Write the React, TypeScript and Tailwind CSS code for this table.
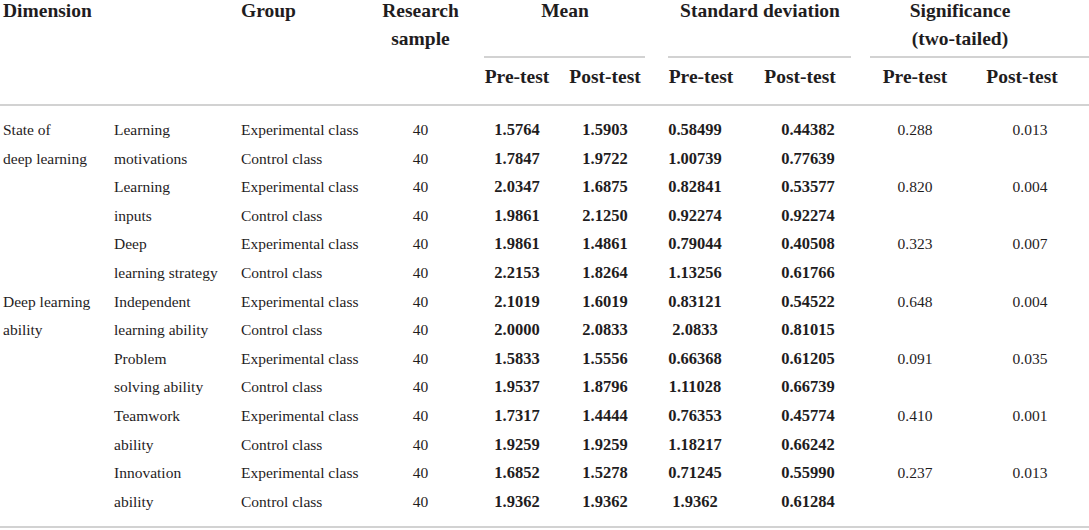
type Row = {
  dim?: string;
  sub: string;
  group: string;
  m1: string;
  m2: string;
  s1: string;
  s2: string;
  p1?: string;
  p2?: string;
};

const EXP = "Experimental class";
const CTRL = "Control class";

const rows: Row[] = [
  { dim: "State of", sub: "Learning", group: EXP, m1: "1.5764", m2: "1.5903", s1: "0.58499", s2: "0.44382", p1: "0.288", p2: "0.013" },
  { dim: "deep learning", sub: "motivations", group: CTRL, m1: "1.7847", m2: "1.9722", s1: "1.00739", s2: "0.77639" },
  { sub: "Learning", group: EXP, m1: "2.0347", m2: "1.6875", s1: "0.82841", s2: "0.53577", p1: "0.820", p2: "0.004" },
  { sub: "inputs", group: CTRL, m1: "1.9861", m2: "2.1250", s1: "0.92274", s2: "0.92274" },
  { sub: "Deep", group: EXP, m1: "1.9861", m2: "1.4861", s1: "0.79044", s2: "0.40508", p1: "0.323", p2: "0.007" },
  { sub: "learning strategy", group: CTRL, m1: "2.2153", m2: "1.8264", s1: "1.13256", s2: "0.61766" },
  { dim: "Deep learning", sub: "Independent", group: EXP, m1: "2.1019", m2: "1.6019", s1: "0.83121", s2: "0.54522", p1: "0.648", p2: "0.004" },
  { dim: "ability", sub: "learning ability", group: CTRL, m1: "2.0000", m2: "2.0833", s1: "2.0833", s2: "0.81015" },
  { sub: "Problem", group: EXP, m1: "1.5833", m2: "1.5556", s1: "0.66368", s2: "0.61205", p1: "0.091", p2: "0.035" },
  { sub: "solving ability", group: CTRL, m1: "1.9537", m2: "1.8796", s1: "1.11028", s2: "0.66739" },
  { sub: "Teamwork", group: EXP, m1: "1.7317", m2: "1.4444", s1: "0.76353", s2: "0.45774", p1: "0.410", p2: "0.001" },
  { sub: "ability", group: CTRL, m1: "1.9259", m2: "1.9259", s1: "1.18217", s2: "0.66242" },
  { sub: "Innovation", group: EXP, m1: "1.6852", m2: "1.5278", s1: "0.71245", s2: "0.55990", p1: "0.237", p2: "0.013" },
  { sub: "ability", group: CTRL, m1: "1.9362", m2: "1.9362", s1: "1.9362", s2: "0.61284" },
];

// shared column template for header and body
const COLS =
  "grid grid-cols-[110px_127px_143px_89px_96px_80px_100px_140px_60px_144px]";

function Rule({ className = "" }: { className?: string }) {
  return <div className={`h-[2px] bg-[#d2d2d2] ${className}`} />;
}

function HeaderGroup({
  title,
  textClass,
  lineClass,
  col,
}: {
  title: React.ReactNode;
  textClass: string;
  lineClass: string;
  col: string;
}) {
  return (
    <div className={`${col} row-start-1 flex flex-col`}>
      <div className={`-mt-[3px] text-center leading-[28px] whitespace-nowrap ${textClass}`}>{title}</div>
      <Rule className={`mt-auto ${lineClass}`} />
    </div>
  );
}

function Sub({ label, className = "" }: { label: string; className?: string }) {
  return (
    <div className={`row-start-2 flex justify-center whitespace-nowrap pt-[5px] leading-[28px] ${className}`}>
      {label}
    </div>
  );
}

function Num({ v, className = "" }: { v?: string; className?: string }) {
  return (
    <div className={`flex justify-center whitespace-nowrap text-[16.5px] font-bold ${className}`}>
      {v}
    </div>
  );
}

export default function App() {
  return (
    <div className="w-[1089px] h-[530px] overflow-hidden bg-white text-[#1f1d1e] font-[family-name:'Liberation_Serif',serif]">
      {/* header */}
      <div className={`${COLS} grid-rows-[58px_46px] text-[19.5px] font-bold`}>
        <div className="col-start-1 row-span-2 -mt-[3px] pl-[3px] leading-[28px]">Dimension</div>
        <div className="col-start-3 row-span-2 -mt-[3px] pl-[4px] leading-[28px]">Group</div>
        <div className="col-start-4 row-span-2 -mt-[3px] pr-[8px] text-center leading-[28px]">
          Research
          <br />
          sample
        </div>

        <HeaderGroup col="col-start-5 col-span-2" title="Mean" textClass="pl-[16px]" lineClass="ml-[15px]" />
        <HeaderGroup
          col="col-start-7 col-span-2"
          title="Standard deviation"
          textClass="pr-[10px]"
          lineClass="ml-[23px] mr-[34px]"
        />
        <HeaderGroup
          col="col-start-9 col-span-2"
          title={
            <>
              Significance
              <br />
              (two-tailed)
            </>
          }
          textClass="pr-[54px]"
          lineClass="-ml-[15px]"
        />

        <Sub label="Pre-test" className="col-start-5" />
        <Sub label="Post-test" className="col-start-6" />
        <Sub label="Pre-test" className="col-start-7 pl-[12px]" />
        <Sub label="Post-test" className="col-start-8 pr-[30px]" />
        <Sub label="Pre-test" className="col-start-9" />
        <Sub label="Post-test" className="col-start-10 pl-[10px]" />
      </div>
      <Rule />

      {/* body */}
      <div className="pt-[10px] pb-[10px] text-[15.5px]">
        {rows.map((r, i) => (
          <div key={i} className={`${COLS} h-[28.6px] items-center leading-[28.6px]`}>
            <div className="pl-[3px] whitespace-nowrap">{r.dim}</div>
            <div className="pl-[4px] whitespace-nowrap">{r.sub}</div>
            <div className="pl-[4px] whitespace-nowrap">{r.group}</div>
            <div className="pr-[8px] text-center">40</div>
            <Num v={r.m1} />
            <Num v={r.m2} />
            <Num v={r.s1} />
            <Num v={r.s2} className="pr-[14px]" />
            <div className="flex justify-center">{r.p1}</div>
            <div className="flex justify-center pl-[26px]">{r.p2}</div>
          </div>
        ))}
      </div>
      <Rule />
    </div>
  );
}
